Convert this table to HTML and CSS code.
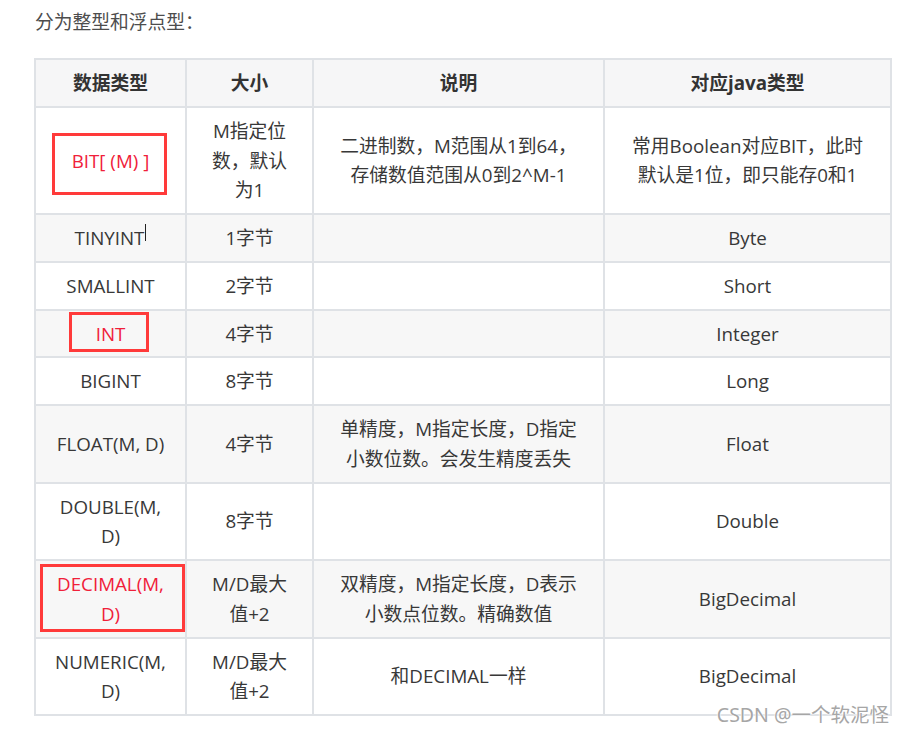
FILE: index.html
```html
<!DOCTYPE html>
<html lang="zh-CN">
<head>
<meta charset="utf-8">
<title>整型和浮点型</title>
<link rel="stylesheet" href="styles.css">
</head>
<body>
<div class="page">
  <p class="intro">分为整型和浮点型：</p>
  <table class="types">
    <colgroup>
      <col class="c1"><col class="c2"><col class="c3"><col class="c4">
    </colgroup>
    <thead>
      <tr><th>数据类型</th><th>大小</th><th>说明</th><th>对应java类型</th></tr>
    </thead>
    <tbody>
      <tr>
        <td class="red">BIT[ (M) ]</td>
        <td>M指定位<br>数，默认<br>为1</td>
        <td>二进制数，M范围从1到64，<br>存储数值范围从0到2^M-1</td>
        <td>常用Boolean对应BIT，此时<br>默认是1位，即只能存0和1</td>
      </tr>
      <tr>
        <td>TINYINT<span class="caret"></span></td>
        <td>1字节</td>
        <td></td>
        <td>Byte</td>
      </tr>
      <tr>
        <td>SMALLINT</td>
        <td>2字节</td>
        <td></td>
        <td>Short</td>
      </tr>
      <tr>
        <td class="red">INT</td>
        <td>4字节</td>
        <td></td>
        <td>Integer</td>
      </tr>
      <tr>
        <td>BIGINT</td>
        <td>8字节</td>
        <td></td>
        <td>Long</td>
      </tr>
      <tr>
        <td>FLOAT(M, D)</td>
        <td>4字节</td>
        <td>单精度，M指定长度，D指定<br>小数位数。会发生精度丢失</td>
        <td>Float</td>
      </tr>
      <tr>
        <td>DOUBLE(M,<br>D)</td>
        <td>8字节</td>
        <td></td>
        <td>Double</td>
      </tr>
      <tr>
        <td class="red">DECIMAL(M,<br>D)</td>
        <td>M/D最大<br>值+2</td>
        <td>双精度，M指定长度，D表示<br>小数点位数。精确数值</td>
        <td>BigDecimal</td>
      </tr>
      <tr>
        <td>NUMERIC(M,<br>D)</td>
        <td>M/D最大<br>值+2</td>
        <td>和DECIMAL一样</td>
        <td>BigDecimal</td>
      </tr>
    </tbody>
  </table>
  <div class="mark mark-bit"></div>
  <div class="mark mark-int"></div>
  <div class="mark mark-decimal"></div>
  <div class="watermark">CSDN @一个软泥怪</div>
</div>
</body>
</html>
```

FILE: styles.css
```css
html, body {
  margin: 0;
  padding: 0;
  background: #ffffff;
}

body {
  font-family: "Open Sans", "Noto Sans CJK SC", sans-serif;
  font-size: 18.75px;
  color: #383838;
}

.page {
  position: relative;
  padding: 7px 0 0 34px;
  width: 856px;
  height: 726px;
}

.intro {
  margin: 0 0 21px 1px;
  line-height: 30px;
  color: #4d4d4d;
}

.types {
  border-collapse: collapse;
  table-layout: fixed;
  width: 856px;
  border: 2px solid #dfe2e6;
}

.c1 { width: 151px; }
.c2 { width: 127px; }
.c3 { width: 291px; }
.c4 { width: 287px; }

.types th,
.types td {
  border: 2px solid #dfe2e6;
  padding: 8px 10px;
  line-height: 29.75px;
  text-align: center;
  vertical-align: middle;
}

.types th {
  background: #f6f6f7;
  font-weight: 700;
  color: #333333;
}

.types tbody tr:nth-child(even) td {
  background: #f7f7f7;
}

.types td.red {
  color: #f0203a;
}

.caret {
  display: inline-block;
  width: 1px;
  height: 17px;
  background: #222;
  vertical-align: 4px;
  margin-left: 1px;
}

.mark {
  position: absolute;
  border: 3px solid #ff3a3a;
  box-sizing: border-box;
}

.mark-bit {
  left: 52px;
  top: 133px;
  width: 115px;
  height: 62px;
}

.mark-int {
  left: 69px;
  top: 312px;
  width: 80px;
  height: 40px;
}

.mark-decimal {
  left: 40px;
  top: 564px;
  width: 145px;
  height: 68px;
}

.watermark {
  position: absolute;
  right: 1px;
  top: 703px;
  font-family: "Noto Sans", "Noto Sans CJK SC", sans-serif;
  font-size: 19.5px;
  line-height: 24px;
  color: #a6a6a6;
  text-shadow: 0 0 2px #ffffff, 0 0 2px #ffffff, 0 0 1px #ffffff;
}
```
